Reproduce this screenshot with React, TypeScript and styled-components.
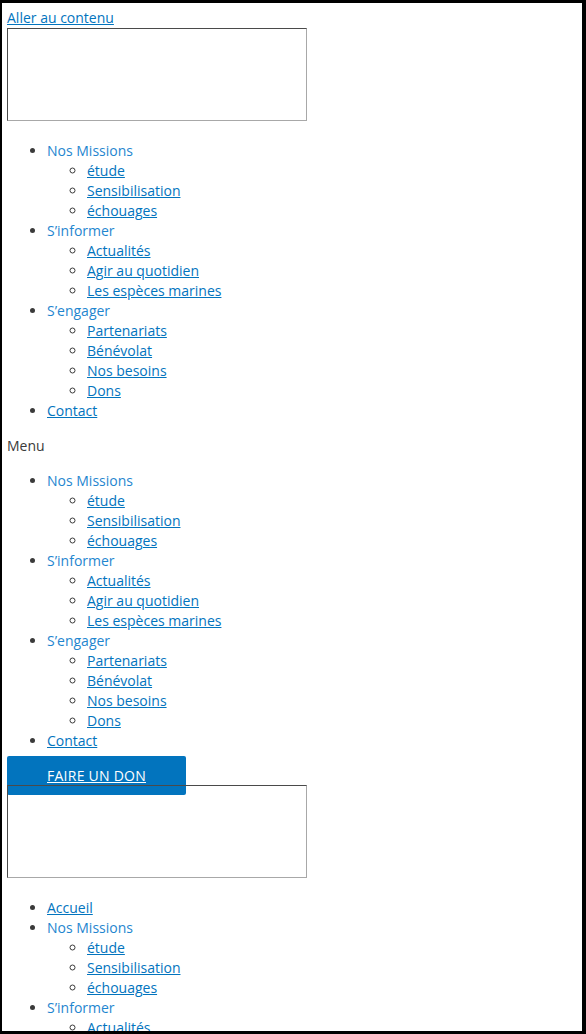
import React from "react";
import styled, { createGlobalStyle } from "styled-components";

const GlobalStyle = createGlobalStyle`
  html, body {
    margin: 0;
    padding: 0;
    background: #ffffff;
  }
`;

const Frame = styled.div`
  box-sizing: border-box;
  width: 586px;
  height: 1034px;
  overflow: hidden;
  border-style: solid;
  border-color: #000000;
  border-width: 3px 4px 3px 2px;
  padding: 5px 0 0 5px;
  background: #ffffff;
  font-family: "Open Sans", "Noto Sans", sans-serif;
  font-size: 14px;
  line-height: 20px;
  color: #3a3a3a;
`;

const SkipLink = styled.a`
  display: block;
  width: max-content;
  color: #0274be;
  text-decoration: underline;
`;

const LogoRow = styled.div``;

const LogoFrame = styled.span`
  display: inline-block;
  box-sizing: border-box;
  width: 300px;
  height: 93px;
  border: 1px solid;
  border-color: #4a4a4a #a8a8a8 #a8a8a8 #4a4a4a;
  background: transparent;
  vertical-align: baseline;
`;

const NavList = styled.ul`
  margin: 15px 0;
  padding: 0 0 0 40px;
  list-style: disc;
`;

const SubList = styled.ul`
  margin: 0;
  padding: 0 0 0 40px;
  list-style: circle;
`;

const Item = styled.li``;

const ParentLabel = styled.span`
  color: #1f86cf;
`;

const NavLink = styled.a`
  color: #0274be;
  text-decoration: underline;
`;

const MenuLabel = styled.div`
  color: #3a3a3a;
`;

const DonateRow = styled.div`
  line-height: 19px;
`;

const DonateButton = styled.a`
  padding: 10px 40px;
  background: #0274be;
  color: #ffffff;
  border-radius: 2px;
  letter-spacing: 0.25px;
  text-decoration: underline;
`;

type Entry = { label: string; children?: string[] };

const mainMenu: Entry[] = [
  { label: "Nos Missions", children: ["étude", "Sensibilisation", "échouages"] },
  { label: "S’informer", children: ["Actualités", "Agir au quotidien", "Les espèces marines"] },
  { label: "S’engager", children: ["Partenariats", "Bénévolat", "Nos besoins", "Dons"] },
  { label: "Contact" },
];

const footerMenu: Entry[] = [{ label: "Accueil" }, ...mainMenu];

const Menu: React.FC<{ entries: Entry[] }> = ({ entries }) => (
  <NavList>
    {entries.map((e) => (
      <Item key={e.label}>
        {e.children ? <ParentLabel>{e.label}</ParentLabel> : <NavLink href="#">{e.label}</NavLink>}
        {e.children && (
          <SubList>
            {e.children.map((c) => (
              <Item key={c}>
                <NavLink href="#">{c}</NavLink>
              </Item>
            ))}
          </SubList>
        )}
      </Item>
    ))}
  </NavList>
);

export default function App() {
  return (
    <>
      <GlobalStyle />
      <Frame>
        <SkipLink href="#content">Aller au contenu</SkipLink>
        <LogoRow>
          <LogoFrame />
        </LogoRow>
        <Menu entries={mainMenu} />
        <MenuLabel>Menu</MenuLabel>
        <Menu entries={mainMenu} />
        <DonateRow>
          <DonateButton href="#">FAIRE UN DON</DonateButton>
        </DonateRow>
        <LogoRow>
          <LogoFrame />
        </LogoRow>
        <Menu entries={footerMenu} />
      </Frame>
    </>
  );
}
